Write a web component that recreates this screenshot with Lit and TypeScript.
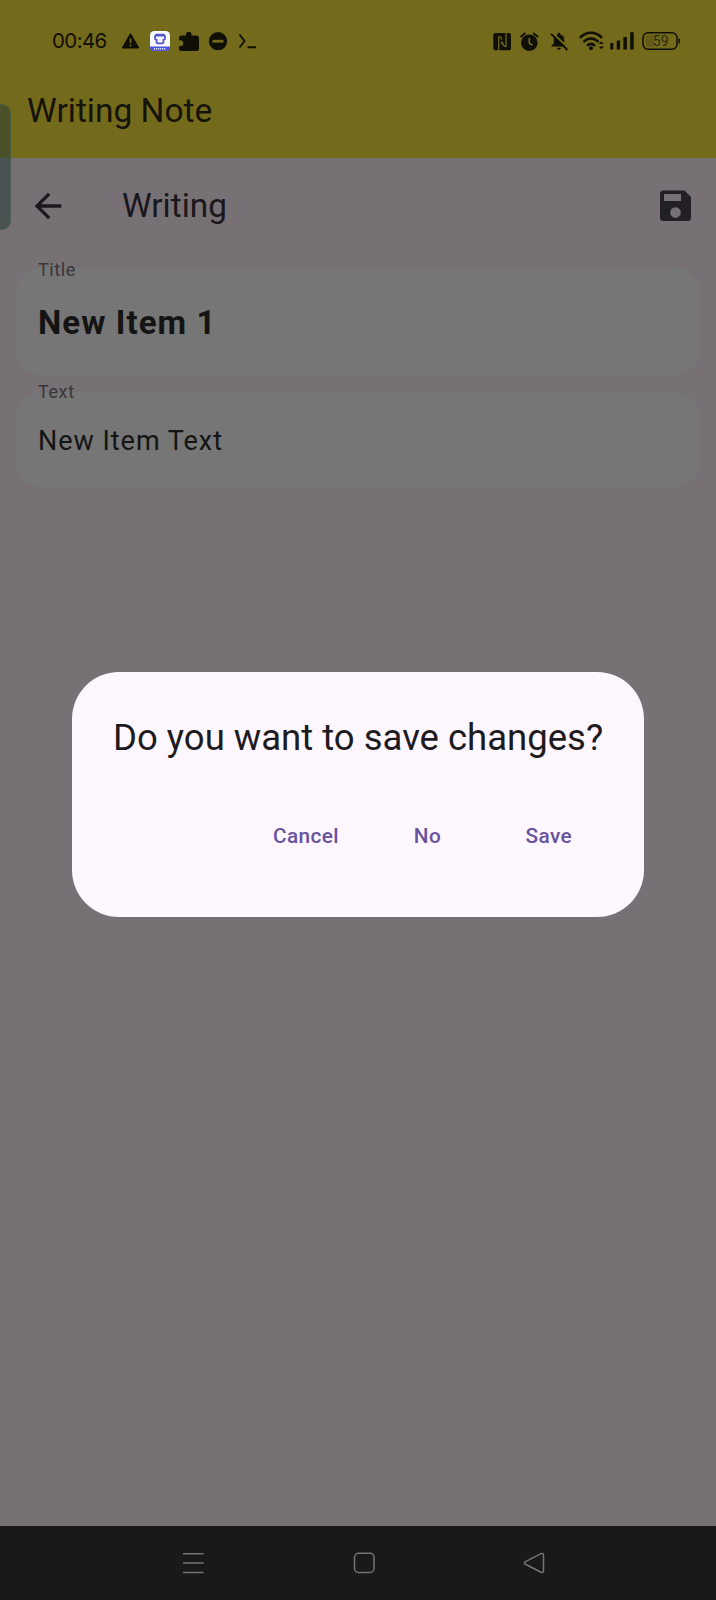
import { LitElement, html, css } from "lit";
import { customElement } from "lit/decorators.js";

@customElement("status-bar")
class StatusBar extends LitElement {
  static styles = css`
    :host { display: flex; justify-content: space-between; height: 82px; padding: 0 36px 0 52px; box-sizing: border-box; color: #100f05; }
    .side { display: flex; height: 82px; align-items: center; }
    .clock { font: 400 20.500px/26px Inter, sans-serif; width: 60px; white-space: nowrap; letter-spacing: -0.600px; }
    svg { display: block; fill: currentColor; }
    text { font-family: Roboto, sans-serif; }
  `;
  render() {
    return html`
      <div class="side">
        <span class="clock">00:46</span>
        <svg width="150" height="30" viewBox="112 26 150 30">
          <path d="M130.500 34 L138.300 47.700 H122.700 Z" stroke="currentColor" stroke-width="1.500" stroke-linejoin="round" />
          <path d="M130.500 38.500 V43 M130.500 44.500 V46.300" stroke="#736b1b" stroke-width="1.600" />
          <rect x="150" y="31" width="20" height="20" rx="4.500" fill="#fbfaff" />
          <path d="M150 46.500 H170 V47 Q170 51 165.500 51 H154.500 Q150 51 150 47 Z" fill="#4c53dc" />
          <path d="M154 48.800 H166" stroke="#d8d9ff" stroke-width="1.700" stroke-dasharray="1.200 .8" />
          <path d="M156 33.800 H164 L165.800 35.500 V39.500 L164.300 40.500 V43 L163 44.300 H157 L155.700 43 V40.500 L154.200 39.500 V35.500 Z" fill="#5459cf" />
          <path d="M156 36.500 H164 V39 H162.500 V42.500 H157.500 V39 H156 Z" fill="#f4f4ff" />
          <path d="M181 35.500 H186 V34.500 A2.700 2.700 0 0 1 191.400 34.500 V35.500 H196.500 Q199 35.500 199 38 V48.500 Q199 51 196.500 51 H181.500 Q179 51 179 48.500 V46.300 H180.300 A3 3 0 0 0 180.300 40.300 H179 V37.500 Q179 35.500 181 35.500 Z" />
          <circle cx="218" cy="41.200" r="9.100" />
          <path d="M212.500 41.200 H223.500" stroke="#736b1b" stroke-width="2.800" />
          <path d="M239.500 34.500 L244.500 41 L239.500 47.500 M247.500 47.200 H256" fill="none" stroke="currentColor" stroke-width="1.900" />
        </svg>
      </div>
      <div class="side">
        <svg width="192" height="30" viewBox="488 26 192 30">
          <rect x="493.300" y="33" width="17.700" height="17.300" rx="2" />
          <path d="M498.700 50.300 V36.800 H500.500 L502 39.500 M506 33 V46.300 H504.300 L501.800 41.500 V44.500" fill="none" stroke="#736b1b" stroke-width="1.200" />
          <circle cx="529.300" cy="42.700" r="8.300" />
          <path d="M520.500 37 L525.500 33 M538.100 37 L533.100 33" stroke="currentColor" stroke-width="2" />
          <path d="M529.300 38 V43.300 L532.500 45.300" fill="none" stroke="#736b1b" stroke-width="1.600" />
          <path d="M551.500 46.500 V45.500 L553.800 43.300 V39.500 Q553.800 35.600 557.600 34.800 V34 Q557.600 32.700 559 32.700 T560.400 34 V34.800 Q564.200 35.600 564.200 39.500 V43.300 L566.500 45.500 V46.500 Z M557 47.800 H561 Q560.800 49.800 559 49.800 T557 47.800 Z" />
          <path d="M552.500 32.800 L568.300 48.300" stroke="#736b1b" stroke-width="2" />
          <path d="M551 33.800 L567.500 50" stroke="currentColor" stroke-width="1.800" />
          <g fill="none" stroke="currentColor" stroke-width="2.500">
            <path d="M580 37.800 C586 31 596 31 602 37.800" />
            <path d="M583.500 41.900 C588 37.200 594 37.200 598.500 41.900" />
            <path d="M587 45.800 C589.500 43.400 592.500 43.400 595 45.800" />
          </g>
          <circle cx="591" cy="48.300" r="2" />
          <path d="M598.700 43.300 L601.300 40.500 L603.900 43.300 Z M598.700 45.700 L601.300 48.500 L603.900 45.700 Z" transform="translate(0 .8)" />
          <path d="M610.300 43 h3 v6.500 h-3 Z M616.700 40.500 h3.400 v9 h-3.400 Z M623.400 37 h3.500 v12.500 h-3.500 Z M630.200 32.300 h3.500 v17.200 h-3.500 Z" />
          <rect x="643" y="32.800" width="34" height="16.500" rx="5" fill="none" stroke="currentColor" stroke-width="1.500" />
          <path d="M648.500 35 H654 V47 H648.500 Q645.500 47 645.500 44 V38 Q645.500 35 648.500 35 Z" fill="#645d1a" />
          <path d="M679.200 38.500 V43.500" stroke="currentColor" stroke-width="1.500" />
          <text x="660.700" y="46" font-size="14" text-anchor="middle" fill="#2d2a0d">59</text>
        </svg>
      </div>`;
  }
}

@customElement("note-field")
class NoteField extends LitElement {
  static properties = { label: {}, value: {}, heading: { type: Boolean } };
  declare label: string;
  declare value: string;
  declare heading: boolean;
  static styles = css`
    :host { display: block; margin: 0 16px; }
    .card { height: 95px; box-sizing: border-box; border-radius: 26px; background: #757675; padding-left: 22px; display: flex; flex-direction: column; color: #141414; box-shadow: 0 0 3px #767475; }
    .card.big { height: 107px; }
    .label { font: 400 18px/22px Roboto, sans-serif; letter-spacing: .6px; margin-top: -11px; color: #38353b; }
    .value { font: 400 27px/32px Roboto, sans-serif; letter-spacing: .98px; margin-top: 22px; }
    .big .label { margin-top: -9px; }
    .big .value { font: 700 33px/40px Roboto, sans-serif; letter-spacing: 1.050px; margin-top: 22px; }
  `;
  render() {
    return html`<div class="card ${this.heading ? "big" : ""}">
      <div class="label">${this.label}</div>
      <div class="value">${this.value}</div>
    </div>`;
  }
}

@customElement("app-root")
class AppRoot extends LitElement {
  static styles = css`
    :host { display: flex; flex-direction: column; height: 1600px; width: 716px; position: relative; overflow: hidden; background: #777175; font-family: Roboto, sans-serif; color: #1a171c; }
    .header { height: 158px; background: #736b1b; flex: none; }
    .app-title { font-size: 33.500px; line-height: 40px; padding-left: 27px; margin-top: 9px; color: #15130a; }
    .toolbar { display: flex; align-items: center; height: 95px; padding: 0 20px 0 28px; flex: none; box-sizing: border-box; }
    .toolbar svg { fill: #1c191e; display: block; }
    .toolbar svg.save { fill: #231f27; }
    .page-title { font-size: 33.400px; line-height: 40px; margin: 0 0 0 54px; flex: 1; }
    .form { flex: 1; padding-top: 15px; display: flex; flex-direction: column; gap: 17px; }
    .nav { height: 74px; flex: none; background: #191919; display: flex; justify-content: center; }
    .nav svg { fill: none; stroke: #747474; stroke-width: 1.500; display: block; }
    .handle { position: absolute; left: -2px; top: 104px; width: 13px; height: 126px; box-sizing: border-box; border-radius: 0 9px 9px 0; background: rgba(40, 60, 52, .55); border: 1.500px solid rgba(70, 110, 82, .55); }
    .overlay { position: absolute; inset: 0; display: flex; align-items: flex-start; justify-content: center; padding-top: 672px; }
    .dialog { width: 572px; height: 245px; box-sizing: border-box; border-radius: 47px; background: #fef7ff; padding: 43px 72px 0 41px; }
    .question { font-size: 36.500px; line-height: 46px; color: #1d1b20; white-space: nowrap; }
    .actions { display: flex; justify-content: flex-end; margin-top: 63px; font-size: 20.800px; line-height: 24px; font-weight: 500; color: #68539f; letter-spacing: .35px; }
    .actions span + span { margin-left: 75px; }
    .actions span:last-child { margin-left: 84.500px; }
  `;
  render() {
    return html`
      <div class="header">
        <status-bar></status-bar>
        <div class="app-title">Writing Note</div>
      </div>
      <div class="toolbar">
        <svg width="40" height="40" viewBox="0 0 24 24"><path d="M20 11H7.830l5.590-5.590L12 4l-8 8 8 8 1.410-1.410L7.830 13H20v-2z" /></svg>
        <div class="page-title">Writing</div>
        <svg class="save" width="42" height="42" viewBox="654 185 42 42"><path fill-rule="evenodd" d="M663.500 190.500 H684.500 L691 197 V217.500 Q691 221 687.500 221 H663.500 Q660 221 660 217.500 V194 Q660 190.500 663.500 190.500 Z M664 194 V201 H681 V194 Z M675.500 207.300 A5.300 5.300 0 1 0 675.500 217.900 A5.300 5.300 0 1 0 675.500 207.300 Z" /></svg>
      </div>
      <div class="form">
        <note-field label="Title" value="New Item 1" heading></note-field>
        <note-field label="Text" value="New Item Text"></note-field>
      </div>
      <div class="nav">
        <svg width="716" height="74" viewBox="0 1526 716 74">
          <path d="M183 1553.700 H203.700 M183 1563 H203.700 M183 1572.500 H203.700" />
          <rect x="354.500" y="1553.300" width="19.500" height="19.200" rx="4" />
          <path d="M525 1561.800 L541 1553.600 Q543.500 1552.800 543.500 1555.300 V1570.700 Q543.500 1573.200 541 1572.200 L525 1564 Q523.700 1562.900 525 1561.800 Z" />
        </svg>
      </div>
      <div class="handle"></div>
      <div class="overlay">
        <div class="dialog">
          <div class="question">Do you want to save changes?</div>
          <div class="actions"><span>Cancel</span><span>No</span><span>Save</span></div>
        </div>
      </div>`;
  }
}
